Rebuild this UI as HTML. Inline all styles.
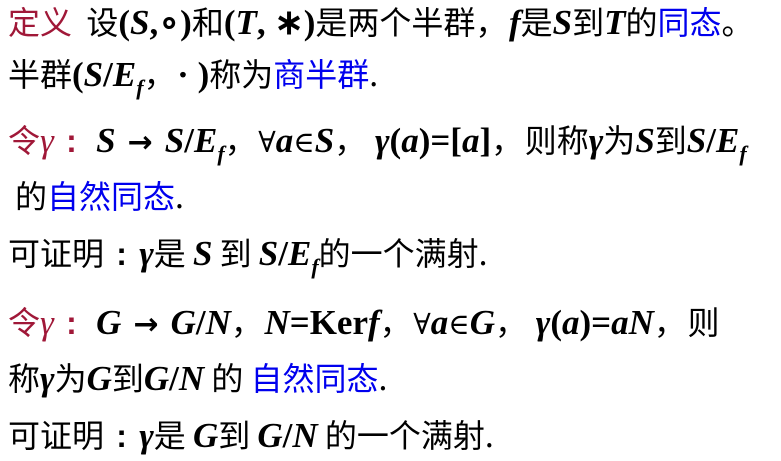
<!DOCTYPE html>
<html><head><meta charset="utf-8"><style>
body{margin:0;width:781px;height:461px;background:#fff;overflow:hidden;position:relative;font-family:"Noto Sans CJK SC","Liberation Sans",sans-serif;font-size:32px;color:#000}
.l{position:absolute;white-space:nowrap;line-height:34px}
.m{font-family:"Liberation Serif",serif;font-style:italic;font-weight:bold;font-size:35px}
.r{font-family:"Liberation Serif",serif;font-weight:bold;font-size:35px}
.s{font-family:"DejaVu Serif",serif;font-size:29px}
.a{display:inline-block;font-family:"DejaVu Sans",sans-serif;font-weight:bold;font-size:30px;margin:0 12px}
.p{display:inline-block;width:1.05em;text-align:left}
.c{display:inline-block;width:1.1em;text-align:center;font-family:"Liberation Sans",sans-serif;font-weight:bold}
.red{color:#a01838}.b{color:#0000ee}
sub{font-size:22px;vertical-align:-9px;line-height:0}
</style></head><body>
<div class="l" style="left:8px;top:4px"><span class="red">定义</span>&nbsp; 设<span class="r">(</span><span class="m">S</span><span class="r">,∘)</span>和<span class="r">(</span><span class="m">T</span><span class="r">, ∗)</span>是两个半群<span class="p">，</span><span class="m">f</span>是<span class="m">S</span>到<span class="m">T</span>的<span class="b">同态</span>。</div>
<div class="l" style="left:8px;top:56px">半群<span class="r">(</span><span class="m">S</span><span class="r">/</span><span class="m">E<sub>f</sub></span><span class="p">，</span><span class="r">· )</span>称为<span class="b">商半群</span>.</div>
<div class="l" style="left:8px;top:122px"><span class="red">令<span class="m" style="font-weight:normal">γ</span><span class="c">:</span></span>&nbsp;<span class="m">S</span><span class="a">→</span><span class="m">S</span><span class="r">/</span><span class="m">E<sub>f</sub></span><span class="p">，</span><span class="s">∀</span><span class="m">a</span><span class="s">∈</span><span class="m">S</span><span class="p">，</span>&nbsp;<span class="m">γ</span><span class="r">(</span><span class="m">a</span><span class="r">)=[</span><span class="m">a</span><span class="r">]</span><span class="p">，</span>则称<span class="m">γ</span>为<span class="m">S</span>到<span class="m">S</span><span class="r">/</span><span class="m">E<sub>f</sub></span></div>
<div class="l" style="left:15px;top:178px">的<span class="b">自然同态</span>.</div>
<div class="l" style="left:8px;top:235px">可证明<span class="c">:</span><span class="m">γ</span>是 <span class="m">S</span> 到 <span class="m">S</span><span class="r">/</span><span class="m">E<sub>f</sub></span>的一个满射.</div>
<div class="l" style="left:8px;top:304px"><span class="red">令<span class="m" style="font-weight:normal">γ</span><span class="c">:</span></span>&nbsp;<span class="m">G</span><span class="a">→</span><span class="m">G</span><span class="r">/</span><span class="m">N</span><span class="p">，</span><span class="m">N</span><span class="r">=Ker</span><span class="m">f</span><span class="p">，</span><span class="s">∀</span><span class="m">a</span><span class="s">∈</span><span class="m">G</span><span class="p">，</span>&nbsp;<span class="m">γ</span><span class="r">(</span><span class="m">a</span><span class="r">)=</span><span class="m">aN</span><span class="p">，</span>则</div>
<div class="l" style="left:8px;top:360px">称<span class="m">γ</span>为<span class="m">G</span>到<span class="m">G</span><span class="r">/</span><span class="m">N</span> 的 <span class="b">自然同态</span>.</div>
<div class="l" style="left:8px;top:417px">可证明<span class="c">:</span><span class="m">γ</span>是 <span class="m">G</span>到 <span class="m">G</span><span class="r">/</span><span class="m">N</span> 的一个满射.</div>
</body></html>
